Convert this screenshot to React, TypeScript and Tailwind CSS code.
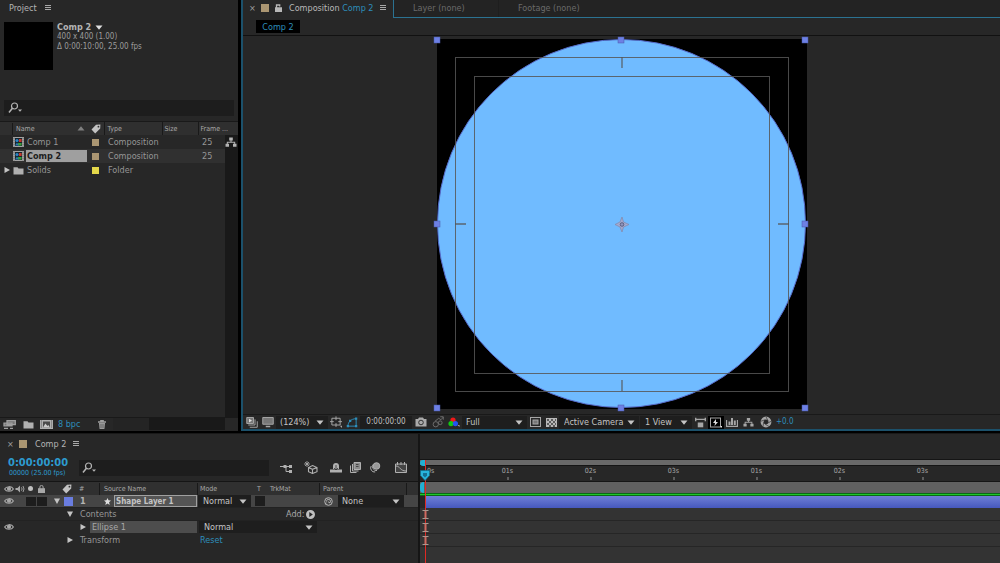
import { useState } from 'react';
import type { ReactNode } from 'react';

type IconProps = { children: ReactNode; className?: string; box?: string };

// 16x16 outline icon, drawn in currentColor
function Icon({ children, className = 'size-4', box = '0 0 16 16' }: IconProps) {
  return (
    <svg viewBox={box} className={`shrink-0 ${className}`} fill="none" stroke="currentColor" strokeWidth="1.3">
      {children}
    </svg>
  );
}

function Caret({ className = '' }: { className?: string }) {
  return (
    <svg viewBox="0 0 8 5" className={`w-2 h-[5px] shrink-0 ${className}`} fill="currentColor">
      <path d="M0.5 0.5h7L4 4.8z" />
    </svg>
  );
}

function Twirl({ open = false }: { open?: boolean }) {
  return (
    <svg viewBox="0 0 8 8" className="size-2 shrink-0" fill="#c4c4c4">
      <path d={open ? 'M1 1.5h6L4 7z' : 'M1.5 1v6L7 4z'} />
    </svg>
  );
}

const MenuIcon = () => (
  <svg viewBox="0 0 6 6" className="size-[6px] shrink-0" stroke="#a8a8a8" strokeWidth="1">
    <path d="M0 0.5h6M0 2.5h6M0 4.5h6" />
  </svg>
);

const SearchIcon = () => (
  <svg viewBox="0 0 15 12" className="w-[15px] h-3 shrink-0" fill="none" stroke="#b4b4b4" strokeWidth="1.2">
    <circle cx="6.5" cy="4" r="3" />
    <path d="M4.4 6.2L1 10.5" strokeWidth="1.5" />
    <path d="M10 7.5h4l-2 2.3z" fill="#b4b4b4" stroke="none" />
  </svg>
);

const TagIcon = () => (
  <svg viewBox="0 0 10 10" className="size-[10px] shrink-0" fill="#c2c2c2">
    <path fillRule="evenodd" d="M5 0.8L9.4 0.5 9.2 4.6 4.2 9.5 0.5 5.6zM7.4 1.8a0.9 0.9 0 1 0 0.1 1.8 0.9 0.9 0 0 0 -0.1-1.8z" />
  </svg>
);

const EyeIcon = () => (
  <svg viewBox="0 0 10 8" className="w-[10px] h-2 shrink-0" fill="none" stroke="#a8a8a8" strokeWidth="1.1">
    <path d="M0.6 4C2.2 1.2 7.8 0.6 9.4 4 7.8 7 2.2 7 0.6 4z" />
    <circle cx="5" cy="3.8" r="1.5" fill="#a8a8a8" />
  </svg>
);

const FlowIcon = ({ className = 'w-3' }: { className?: string }) => (
  <svg viewBox="0 0 12 10" className={`h-[10px] shrink-0 ${className}`} fill="currentColor">
    <path d="M4.2 0.5h3.6v3H6.5v1.3h3.7v2h1.3v3H8v-3h1.200v-1h-6.400v1H4v3H0.500v-3h1.300v-2h3.700V3.500H4.200z" />
  </svg>
);

const CompIcon = () => (
  <svg viewBox="0 0 11 10" className="w-[11px] h-[10px] shrink-0">
    <rect width="11" height="10" fill="#a3a3a3" />
    <rect x="2" y="1" width="7" height="8" fill="#16242c" />
    <circle cx="4" cy="3.5" r="1.6" fill="#2a86c8" />
    <rect x="6" y="2" width="2.6" height="3" fill="#c8372c" />
    <path d="M5 6h3.6v2.6H5z" fill="#3a9c3a" />
    <path d="M2 8.6l2-3 2 3z" fill="#2f7ab0" />
    <path d="M1 0.8v8.6M10 0.8v8.6" stroke="#3d3d3d" strokeWidth="0.7" strokeDasharray="1 1" />
  </svg>
);

const FolderIcon = () => (
  <svg viewBox="0 0 11 9" className="w-[11px] h-[9px] shrink-0" fill="#b0b0b0">
    <path d="M0.5 1.2h4l1 1.2h5v6h-10z" />
  </svg>
);

type DropdownProps = { label: string; options: string[]; className: string };

function Dropdown({ label, options, className }: DropdownProps) {
  return (
    <div className={`relative flex items-center shrink-0 bg-[#1e1e1e] text-[#c4c4c4] ${className}`}>
      <select aria-label={label} className="w-full h-full appearance-none bg-transparent outline-none leading-3">
        {options.map((o) => (
          <option key={o}>{o}</option>
        ))}
      </select>
      <Caret className="absolute right-1 pointer-events-none" />
    </div>
  );
}

const assets = [
  { name: 'Comp 1', type: 'Composition', rate: '25', swatch: 'bg-[#ab9672]' },
  { name: 'Comp 2', type: 'Composition', rate: '25', swatch: 'bg-[#ab9672]' },
  { name: 'Solids', type: 'Folder', rate: '', swatch: 'bg-[#e4d84a]' },
];

function ProjectPanel() {
  const [selected, setSelected] = useState('Comp 2');

  return (
    <section className="w-[239px] shrink-0 flex flex-col bg-[#272727] border-r border-black">
      <div className="flex items-center gap-2 h-4 pl-[9px] text-[#b4b4b4]">
        <h2>Project</h2>
        <button aria-label="Project menu"><MenuIcon /></button>
      </div>

      <div className="flex gap-1 mt-[6px] pl-1 h-[78px]">
        <div className="w-[49px] h-12 bg-black" />
        <div className="text-[8px] leading-[10px] text-[#9c9c9c]">
          <button className="flex items-center gap-1 text-[9px] font-bold text-[#b4b4b4]">
            Comp 2 <Caret className="text-[#e0e0e0]" />
          </button>
          <p>400 x 400 (1.00)</p>
          <p>Δ 0:00:10:00, 25.00 fps</p>
        </div>
      </div>

      <label className="flex items-center h-4 mx-1 pl-1 bg-[#1d1d1d]">
        <SearchIcon />
        <input aria-label="Search project" className="flex-1 min-w-0 bg-transparent outline-none" />
      </label>

      <div className="flex-1 mt-[5px] border-t border-[#191919] relative">
        <div className="absolute right-0 top-[14px] bottom-0 w-[13px] bg-[#191919]" />
        <table className="relative w-full table-fixed border-collapse">
          <colgroup>
            <col className="w-[91px]" />
            <col className="w-[13px]" />
            <col className="w-[58px]" />
            <col className="w-[36px]" />
            <col className="w-[27px]" />
            <col />
          </colgroup>
          <thead>
            <tr className="h-[13px] bg-[#2f2f2f] text-[7px] text-left text-[#a8a8a8]">
              <th className="font-normal">
                <div className="flex items-center justify-between ml-3 pl-[3px] pr-[6px] border-l border-[#191919]">
                  Name
                  <Caret className="rotate-180 text-[#808080]" />
                </div>
              </th>
              <th><TagIcon /></th>
              <th className="font-normal pl-[3px] border-l border-[#191919]">Type</th>
              <th className="font-normal pl-[2px] border-l border-[#191919]">Size</th>
              <th colSpan={2} className="font-normal pl-[2px] border-l border-[#191919]">Frame ...</th>
            </tr>
          </thead>
          <tbody>
            {assets.map((a) => (
              <tr
                key={a.name}
                onClick={() => setSelected(a.name)}
                className={`h-[14px] text-[#969696] ${a.name === selected ? 'bg-[#303030]' : ''}`}
              >
                <td>
                  <div className="flex items-center h-[14px] pl-[3px]">
                    <span className="w-[10px]">{a.type === 'Folder' && <Twirl />}</span>
                    {a.type === 'Folder' ? <FolderIcon /> : <CompIcon />}
                    <span
                      className={`w-[61px] ml-[2px] pl-px h-3 leading-3 ${
                        a.name === selected ? 'bg-[#9f9f9f] text-[#1c1c1c] font-bold' : ''
                      }`}
                    >
                      {a.name}
                    </span>
                  </div>
                </td>
                <td><div className={`size-[7px] ml-px ${a.swatch}`} /></td>
                <td className="pl-1">{a.type}</td>
                <td />
                <td className="pl-1">{a.rate}</td>
                <td className="bg-[#191919]">
                  {a.name === 'Comp 1' && <FlowIcon className="w-3 text-[#b4b4b4]" />}
                </td>
              </tr>
            ))}
          </tbody>
        </table>
      </div>

      <div className="flex items-center h-[13px] pl-[3px] mb-px border-t border-[#191919] text-[#a0a0a0]">
        <button aria-label="Interpret footage" className="w-[20px]">
          <Icon className="w-[13px] h-[9px]" box="0 0 13 9">
            <path d="M4 0.7h8.3v4H4zM1 3.2h8v2.6H1z" fill="#777" />
            <path d="M1 8.3h4M7 8.3h3" />
          </Icon>
        </button>
        <button aria-label="New folder" className="w-[17px]"><FolderIcon /></button>
        <button aria-label="New composition" className="w-[18px]">
          <Icon className="w-[13px] h-[9px]" box="0 0 13 9">
            <path d="M0 0h13v9H0z" fill="#b0b0b0" stroke="none" />
            <path d="M3 1.5h7v6H3z" fill="#4a4a4a" stroke="none" />
            <path d="M3 7.5l2.4-4 2 2.4 1-1 1.6 2.6z" fill="#ccc" stroke="none" />
            <path d="M1.4 0.5v8M11.6 0.5v8" stroke="#444" strokeWidth="0.8" strokeDasharray="1 1" />
          </Icon>
        </button>
        <button className="w-10 text-left text-[#2d8ebb]">8 bpc</button>
        <button aria-label="Delete" className="w-[14px]">
          <Icon className="w-2 h-[9px]" box="0 0 8 9">
            <path d="M0 2h8M2.8 1.4V0.6h2.4v0.8" />
            <path d="M1 3h6l-0.6 6H1.6z" fill="currentColor" stroke="none" />
            <path d="M3 3.8v4.4M5 3.8v4.4" stroke="#333" strokeWidth="0.6" />
          </Icon>
        </button>
        <div className="flex-1 h-full ml-px mr-[13px] flex bg-[#191919]">
          <div className="w-9 bg-[#242424]" />
        </div>
      </div>
    </section>
  );
}

const handles = [[437, 40], [621, 40], [805, 40], [437, 224], [805, 224], [437, 408], [621, 408], [805, 408]];

function Canvas() {
  return (
    <svg viewBox="433 36 378 376" className="w-[378px] h-[376px]">
      <rect x="437" y="39" width="370" height="370" fill="#000" />
      <circle cx="621.5" cy="223.5" r="184" fill="#70bbff" stroke="#5569c8" />
      <g fill="none" stroke="#565656" strokeOpacity="0.85">
        <rect x="455.5" y="57.5" width="333" height="334" />
        <rect x="474.5" y="76.5" width="295" height="297" />
        <path d="M622 57v11M622 380v11M455 224h11M778 224h11" strokeWidth="1.3" />
      </g>
      <path d="M622 217l1.5 5 5.5 2.5-5.5 2.5-1.5 5-2-5-5-2.5 5-2.5z" fill="#a3a9cf" stroke="#8387a8" strokeWidth="0.7" />
      <circle cx="622" cy="224.5" r="1.8" fill="#8f96c0" stroke="#4f5270" strokeWidth="0.8" />
      {handles.map(([x, y]) => (
        <rect key={`${x}-${y}`} x={x - 3} y={y - 3} width="6" height="6" fill="#6d80e4" stroke="#4757a8" strokeWidth="0.5" />
      ))}
    </svg>
  );
}

const tool = 'w-4 h-[13px] shrink-0 flex items-center justify-center';

function ViewerToolbar() {
  return (
    <div className="flex items-center h-[15px] pl-px border-t border-[#191919] text-[#a6a6a6] whitespace-nowrap overflow-hidden">
      <button aria-label="Always preview" className={tool}>
        <Icon className="size-3">
          <path d="M1 2h9v8H1z" fill="#777" />
          <path d="M3 12h9V4.500M5 15h10V7" />
          <path d="M4 3.500l4 2.500-4 2.500z" fill="#ddd" stroke="none" />
        </Icon>
      </button>
      <button aria-label="Primary viewer" className={tool}>
        <Icon className="size-3">
          <path d="M1 2h14v9H1z" fill="#777" />
          <path d="M5 14h6" strokeWidth="2" />
        </Icon>
      </button>
      <Dropdown label="Magnification" options={['(124%)', '100%', 'Fit']} className="w-[52px] h-[13px] pl-1" />
      <button aria-label="Grid and guides" className={tool}>
        <Icon className="size-3">
          <path d="M2.500 3h11v9h-11zM8 0.500v5M8 9.500v5M0 7.500h5M11 7.500h5" />
          <path d="M13 13h3v3z" fill="currentColor" stroke="none" />
        </Icon>
      </button>
      <button aria-label="Toggle mask visibility" className={`${tool} text-[#2d8ebb]`}>
        <Icon className="size-3">
          <path d="M2.500 13.500C3 8 6 4 13.500 3.500v10z" />
          <path d="M1 12h3v3H1zM12 2h3v3h-3zM12 12h3v3h-3zM4 5h3v3H4z" fill="currentColor" stroke="none" />
        </Icon>
      </button>
      <button className="w-[52px] h-[13px] shrink-0 bg-[#1e1e1e] text-[8px] text-[#c0c0c0]">0:00:00:00</button>
      <button aria-label="Take snapshot" className={`${tool} ml-px`}>
        <Icon className="w-3 h-[10px]" box="0 0 12 10">
          <path d="M0.500 2h2.500l1-1.500h4L9 2h2.500v7.500H0.500z" fill="#aaa" stroke="none" />
          <circle cx="6" cy="5.500" r="2.300" stroke="#333" strokeWidth="1" />
        </Icon>
      </button>
      <button aria-label="Show snapshot" className={`${tool} ml-px text-[#6e6e6e]`}>
        <Icon className="size-3">
          <circle cx="5" cy="11" r="3.500" />
          <circle cx="11" cy="9" r="2.500" />
          <path d="M4 7l5-4 3 2 3-3.500M11 1h4v4" />
        </Icon>
      </button>
      <button aria-label="Show channel" className={tool}>
        <svg viewBox="0 0 12 10" className="w-3 h-[10px]">
          <circle cx="5" cy="3" r="2.600" fill="#f01818" />
          <circle cx="3" cy="6.600" r="2.600" fill="#12c812" />
          <circle cx="7.400" cy="6.600" r="2.600" fill="#2454f0" />
          <path d="M9.500 8h2v2z" fill="#aaa" />
        </svg>
      </button>
      <Dropdown label="Resolution" options={['Full', 'Half', 'Quarter']} className="w-[65px] h-[13px] pl-1" />
      <button aria-label="Region of interest" className={tool}>
        <Icon className="w-[11px] h-[10px]" box="0 0 11 10">
          <rect x="0.500" y="0.500" width="10" height="9" strokeWidth="1" />
          <rect x="3" y="3" width="5" height="4" strokeWidth="1" fill="#777" />
        </Icon>
      </button>
      <button aria-label="Transparency grid" className={tool}>
        <Icon className="w-[11px] h-[9px]" box="0 0 11 9">
          <path d="M0 0h11v9H0z" fill="#b8b8b8" stroke="none" />
          <path d="M1 2h9M1 6h9" strokeWidth="2" stroke="#5c5c5c" strokeDasharray="2 2" />
          <path d="M3 4h7M3 8h7" strokeWidth="2" stroke="#5c5c5c" strokeDasharray="2 2" />
        </Icon>
      </button>
      <Dropdown label="Camera" options={['Active Camera', 'Front', 'Top']} className="w-[80px] h-[13px] pl-[5px]" />
      <Dropdown label="View layout" options={['1 View', '2 Views', '4 Views']} className="w-[52px] h-[13px] ml-px pl-[5px]" />
      <button aria-label="Pixel aspect correction" className={tool}>
        <Icon className="size-[11px]">
          <path d="M1 1v5M15 1v5M2 3.500h12" strokeWidth="2" />
          <path d="M4 8h8v7H4z" fill="currentColor" stroke="none" />
        </Icon>
      </button>
      <button aria-label="Fast previews" className={`${tool} bg-black`}>
        <Icon className="w-3 h-[11px]" box="0 0 12 11">
          <rect x="0.500" y="1" width="10" height="9" strokeWidth="1" />
          <path d="M6 2L3 6h2l-0.500 3L8 5H6z" fill="#ddd" stroke="none" />
          <path d="M10 9h2v2z" fill="#ddd" stroke="none" />
        </Icon>
      </button>
      <button aria-label="Timeline" className={tool}>
        <Icon className="w-3 h-[10px]" box="0 0 12 10">
          <path d="M0.500 3v6.500h11V3" />
          <path d="M2.500 4.500h2V8h-2zM5 1h2v7H5zM7.800 3.500h2V8h-2z" fill="currentColor" stroke="none" />
        </Icon>
      </button>
      <button aria-label="Flowchart" className={tool}><FlowIcon className="w-[11px]" /></button>
      <button aria-label="Reset exposure" className={`${tool} ml-[2px]`}>
        <Icon className="size-3">
          <circle cx="8" cy="8" r="5.200" strokeWidth="4" />
          <path d="M8 1l3 6M15 7l-6 3M12 14l-5-3M4 14l1-6M1 7l6-2" stroke="#3c3c3c" strokeWidth="1" />
        </Icon>
      </button>
      <button className="ml-[2px] text-[8px] text-[#2d8ebb]">+0.0</button>
    </div>
  );
}

function CompositionPanel() {
  return (
    <section className="flex-1 min-w-0 flex flex-col bg-[#272727] border-l-2 border-b-2 border-[#1c516b]">
      <div className="flex h-[18px]">
        <div className="flex items-center w-[150px] h-4 pl-[6px] text-[#b8b8b8]">
          <button aria-label="Close" className="w-3 text-left text-[#a0a0a0]">×</button>
          <span className="size-2 bg-[#ab9672]" />
          <Icon className="w-[7px] h-2 ml-[6px]" box="0 0 7 8">
            <path d="M0.500 4h6v3.500h-6z" fill="currentColor" />
            <path d="M1.500 4V1h3.200v1.500" />
          </Icon>
          <h2 className="ml-[7px] whitespace-nowrap">
            Composition <span className="text-[#2d8ebb]">Comp 2</span>
          </h2>
          <button aria-label="Composition menu" className="ml-[6px]"><MenuIcon /></button>
        </div>
        {/* inactive tabs sit inside the focus outline */}
        <div className="flex-1 flex pl-px pb-px bg-[#2b7291]">
          <div className="flex-1 flex items-center bg-[#232323] text-[#6a6a6a]">
            <button className="w-[105px] h-full pl-[19px] pb-[2px] text-left border-r border-[#1e1e1e]">Layer (none)</button>
            <button className="pl-[19px] pb-[2px]">Footage (none)</button>
          </div>
        </div>
      </div>
      <div className="flex items-center h-[18px] pl-[13px] border-b border-[#111]">
        <button className="w-11 h-[13px] bg-black text-[#2d8ebb]">Comp 2</button>
      </div>
      <div className="flex-1 flex justify-center overflow-hidden"><Canvas /></div>
      <ViewerToolbar />
    </section>
  );
}

const marks = ['01s', '02s', '03s', '01s', '02s', '03s'];

// I-beam shown on property rows at the current time
const Beam = () => (
  <svg viewBox="0 0 7 9" className="relative z-10 w-[7px] h-[9px] ml-[2px]" fill="none">
    <path d="M3.500 1v7" stroke="#d0695f" strokeWidth="2" />
    <path d="M0.500 0.500h6M0.500 8.500h6" stroke="#a89890" />
  </svg>
);

function TimeGraph() {
  return (
    <div className="relative flex-1 min-w-0 flex flex-col bg-[#272727] border-l-2 border-[#151515] overflow-hidden">
      <div className="h-[25px]" />
      <div className="h-[7px] border-y border-[#151515] bg-[#696969]" />
      <div className="flex h-[15px] text-[7px] text-[#a8a8a8] leading-[10px]">
        <span className="w-[46px] pl-[7px] shrink-0">0s</span>
        {marks.map((m, i) => (
          <span key={i} className="w-[83px] shrink-0 flex flex-col items-center">
            {m}
            <i className="w-[2px] h-[3px] mt-px bg-[#5c5c5c]" />
          </span>
        ))}
      </div>
      <div className="h-3 border-t border-[#151515] bg-[#606060]" />
      <div className="h-[3px] border-y border-[#0a6a14] bg-[#1fc42a]" />
      <div className="h-3 ml-[5px] bg-linear-to-b from-[#707fd6] to-[#4658bd]" />
      {[0, 1, 2].map((i) => (
        <div key={i} className="flex items-center h-[13px] border-b border-[#262626] bg-[#333]"><Beam /></div>
      ))}
      <div className="flex-1 bg-[#333]" />

      <div className="absolute left-0 top-[26px] w-[5px] h-[6px] rounded-l-sm bg-[#22b0d4]" />
      <div className="absolute left-0 top-[48px] w-1 h-[11px] rounded-l-sm bg-[#22b0d4]" />
      <div className="absolute left-[5px] top-[26px] bottom-0 w-px bg-[#e02a24]" />
      <svg viewBox="0 0 10 11" className="absolute left-0 top-[36px] w-[10px] h-[11px]">
        <path d="M0.500 0.500h9v5L5 10.500 0.500 5.500z" fill="#27b4dc" stroke="#0f6e8c" strokeWidth="0.700" />
        <path d="M3 3h4v2.500l-2 2-2-2z" fill="#156f92" />
      </svg>
    </div>
  );
}

function TimelinePanel() {
  const [name, setName] = useState('Shape Layer 1');

  return (
    <section className="flex min-h-[130px] bg-[#272727] border-t border-[#191919]">
      <div className="w-[418px] shrink-0 whitespace-nowrap">
        <div className="flex items-center h-5 pl-[7px] text-[#b4b4b4]">
          <button aria-label="Close" className="w-3 text-left text-[#a0a0a0]">×</button>
          <span className="size-2 bg-[#ab9672]" />
          <h2 className="ml-2">Comp 2</h2>
          <button aria-label="Timeline menu" className="ml-[7px]"><MenuIcon /></button>
        </div>

        <div className="flex items-center h-[27px] pl-2 text-[#b0b0b0]">
          <div className="w-[71px] text-[#2d9bd0]">
            <p className="text-[11px] leading-3 font-bold">0:00:00:00</p>
            <p className="pl-px text-[7px] leading-[9px]">00000 (25.00 fps)</p>
          </div>
          <label className="flex items-center w-[190px] h-4 pl-[3px] bg-[#1d1d1d]">
            <SearchIcon />
            <input aria-label="Search layers" className="flex-1 min-w-0 bg-transparent outline-none" />
          </label>
          <button aria-label="Mini-flowchart" className="ml-[11px]">
            <Icon className="w-3 h-[10px]" box="0 0 12 10">
              <path d="M0 3.500h4M6 3.500h3M6 3.500v5h3" strokeWidth="1" />
              <path d="M3.500 2h3v3h-3zM9 2h3v3H9zM9 7h3v3H9z" fill="currentColor" stroke="none" />
            </Icon>
          </button>
          <button aria-label="Draft 3D" className="ml-3">
            <Icon className="w-[14px] h-[13px]" box="0 0 14 13">
              <path d="M8.500 4.500l4.500 2v4.200L8.500 12.500 4.500 10.700V6.500zM4.500 6.500l4 1.800 4.500-1.800M8.500 8.300v4.200" strokeWidth="1.100" />
              <path d="M3 0v6M0 3h6M1 1l4 4M5 1L1 5" strokeWidth="0.800" />
            </Icon>
          </button>
          <button aria-label="Hide shy layers" className="ml-3">
            <Icon className="w-3 h-[10px]" box="0 0 12 10">
              <path d="M0 6.500h12V9.500H0z" fill="currentColor" stroke="none" />
              <path d="M3 6V3a3 3 0 0 1 6 0v3z" fill="currentColor" stroke="none" />
              <path d="M6 2v5M4 5l2 2 2-2" stroke="#333" strokeWidth="0.800" />
            </Icon>
          </button>
          <button aria-label="Frame blending" className="ml-2">
            <Icon className="w-[11px] h-[11px]" box="0 0 11 11">
              <path d="M4 0.500h6.500v7H4z" fill="#8a8a8a" strokeWidth="1" />
              <path d="M2.500 2v7h6M0.500 3.500v7h6" strokeWidth="1" />
              <path d="M6 2.500h2.500M6 4.500h2.500" stroke="#333" strokeWidth="0.800" />
            </Icon>
          </button>
          <button aria-label="Motion blur" className="ml-2">
            <Icon className="w-3 h-[11px]" box="0 0 12 11">
              <circle cx="7.500" cy="4" r="3.300" fill="#999" strokeWidth="1" />
              <path d="M4 2.500a4 4 0 0 0 4 6M2.200 4a4 4 0 0 0 4 6" strokeWidth="1" />
            </Icon>
          </button>
          <button aria-label="Graph editor" className="ml-[14px]">
            <Icon className="w-3 h-[11px]" box="0 0 12 11">
              <path d="M0.500 2h11v8.500H0.500z" fill="#444" strokeWidth="1" />
              <path d="M1 4c4 0 4 5 10 5M2.500 0v3M6 0v3M9.500 0v3" strokeWidth="1" />
            </Icon>
          </button>
        </div>

        <div className="flex items-center h-[14px] border-t border-[#151515] bg-[#303030] text-[7px] text-[#a8a8a8]">
          <div className="flex items-center w-[62px] pl-1 gap-px text-[#a8a8a8]">
            <EyeIcon />
            <Icon className="w-[10px] h-2" box="0 0 10 8">
              <path d="M0.500 3h2L5 0.500v7L2.500 5h-2z" fill="currentColor" stroke="none" />
              <path d="M6.500 2.300q1.200 1.700 0 3.400M8 1q2 3 0 6" strokeWidth="0.900" />
            </Icon>
            <span className="size-[5px] ml-[2px] rounded-full bg-[#c0c0c0]" />
            <Icon className="w-[7px] h-2 ml-1" box="0 0 7 8">
              <path d="M0.500 3.800h6v3.700h-6z" fill="currentColor" />
              <path d="M1.900 4V2a1.600 1.600 0 0 1 3.200 0v2" strokeWidth="1" />
            </Icon>
          </div>
          <TagIcon />
          <span className="w-[27px] pl-[7px]">#</span>
          <span className="w-[98px] pl-1 border-l border-[#191919]">Source Name</span>
          <span className="w-[57px] pl-[2px] border-l border-[#191919]">Mode</span>
          <span className="w-[13px] pl-[3px]">T</span>
          <span className="w-[52px] pl-[3px]">TrkMat</span>
          <span className="w-[88px] pl-[3px] border-x border-[#191919]">Parent</span>
        </div>

        <div className="flex items-center h-[13px] border-b border-[#222] bg-[#454545] text-[#b4b4b4]">
          <button aria-label="Toggle layer video" className="w-[26px] pl-1"><EyeIcon /></button>
          <span className="w-[10px] h-[9px] bg-[#1d1d1d]" />
          <span className="w-[10px] h-[9px] ml-px bg-[#1d1d1d]" />
          <button aria-label="Collapse layer" className="w-[17px] pl-[6px]"><Twirl open /></button>
          <span className="size-[9px] bg-[#6a7de0]" />
          <span className="w-[31px] pl-[7px] font-bold">1</span>
          <svg viewBox="0 0 8 8" className="size-[7px]" fill="#dedede">
            <path d="M4 0l1.200 2.700 2.800 0.200-2.200 1.900L6.500 8 4 6.300 1.500 8l0.700-3.200L0 2.900l2.800-0.200z" />
          </svg>
          <input
            aria-label="Layer name"
            value={name}
            onChange={(e) => setName(e.target.value)}
            className="w-[83px] h-3 ml-[3px] pl-px pt-px border border-[#a0a0a0] bg-[#555] text-[8px] font-bold text-[#c4c4c4] outline-none"
          />
          <Dropdown label="Blending mode" options={['Normal', 'Multiply', 'Screen']} className="w-[53px] h-3 ml-px pl-[5px]" />
          <span className="size-[10px] ml-1 bg-[#1d1d1d]" />
          <Icon className="size-[9px] ml-[59px] mr-[5px]" box="0 0 9 9">
            <circle cx="4.500" cy="4.500" r="3.800" strokeWidth="1" />
            <path d="M2.500 4.500a2 2 0 1 1 3.500 1.200Q4.500 6 4.300 4.500M1 7l1.500-1" strokeWidth="1" />
          </Icon>
          <Dropdown label="Parent" options={['None']} className="w-[66px] h-3 pl-1" />
        </div>

        <div className="flex items-center h-[13px] pl-[66px] text-[#969696] border-b border-[#222]">
          <button className="flex items-center gap-[6px] w-[220px]"><Twirl open />Contents</button>
          <button className="flex items-center gap-[2px] text-[#a8a8a8]">
            Add:
            <svg viewBox="0 0 9 9" className="size-[9px]" fill="#c0c0c0">
              <path fillRule="evenodd" d="M4.500 0a4.500 4.500 0 1 0 0 9 4.500 4.500 0 0 0 0-9zM3.300 2l3.500 2.500L3.300 7z" />
            </svg>
          </button>
        </div>

        <div className="flex items-center h-3 pl-1 text-[#969696]">
          <button aria-label="Toggle shape" className="w-[75px]"><EyeIcon /></button>
          <button aria-label="Expand shape" className="w-[11px]"><Twirl /></button>
          <span className="w-[107px] h-3 leading-3 pl-[2px] bg-[#4d4d4d] text-[#a8a8a8]">Ellipse 1</span>
          <Dropdown label="Shape blending mode" options={['Normal', 'Multiply', 'Screen']} className="w-[118px] h-3 ml-[2px] pl-[5px]" />
        </div>

        <div className="flex items-center h-[13px] pl-[66px] text-[#969696]">
          <button className="flex items-center gap-[6px] w-[134px]"><Twirl />Transform</button>
          <button className="text-[#2d8ebb]">Reset</button>
        </div>
      </div>

      <TimeGraph />
    </section>
  );
}

export default function App() {
  return (
    <main className="min-h-screen flex flex-col gap-[2px] bg-black text-[9px] leading-3 font-['DejaVu_Sans_Condensed','DejaVu_Sans',sans-serif]">
      <div className="flex-1 flex gap-[2px]">
        <ProjectPanel />
        <CompositionPanel />
      </div>
      <TimelinePanel />
    </main>
  );
}
